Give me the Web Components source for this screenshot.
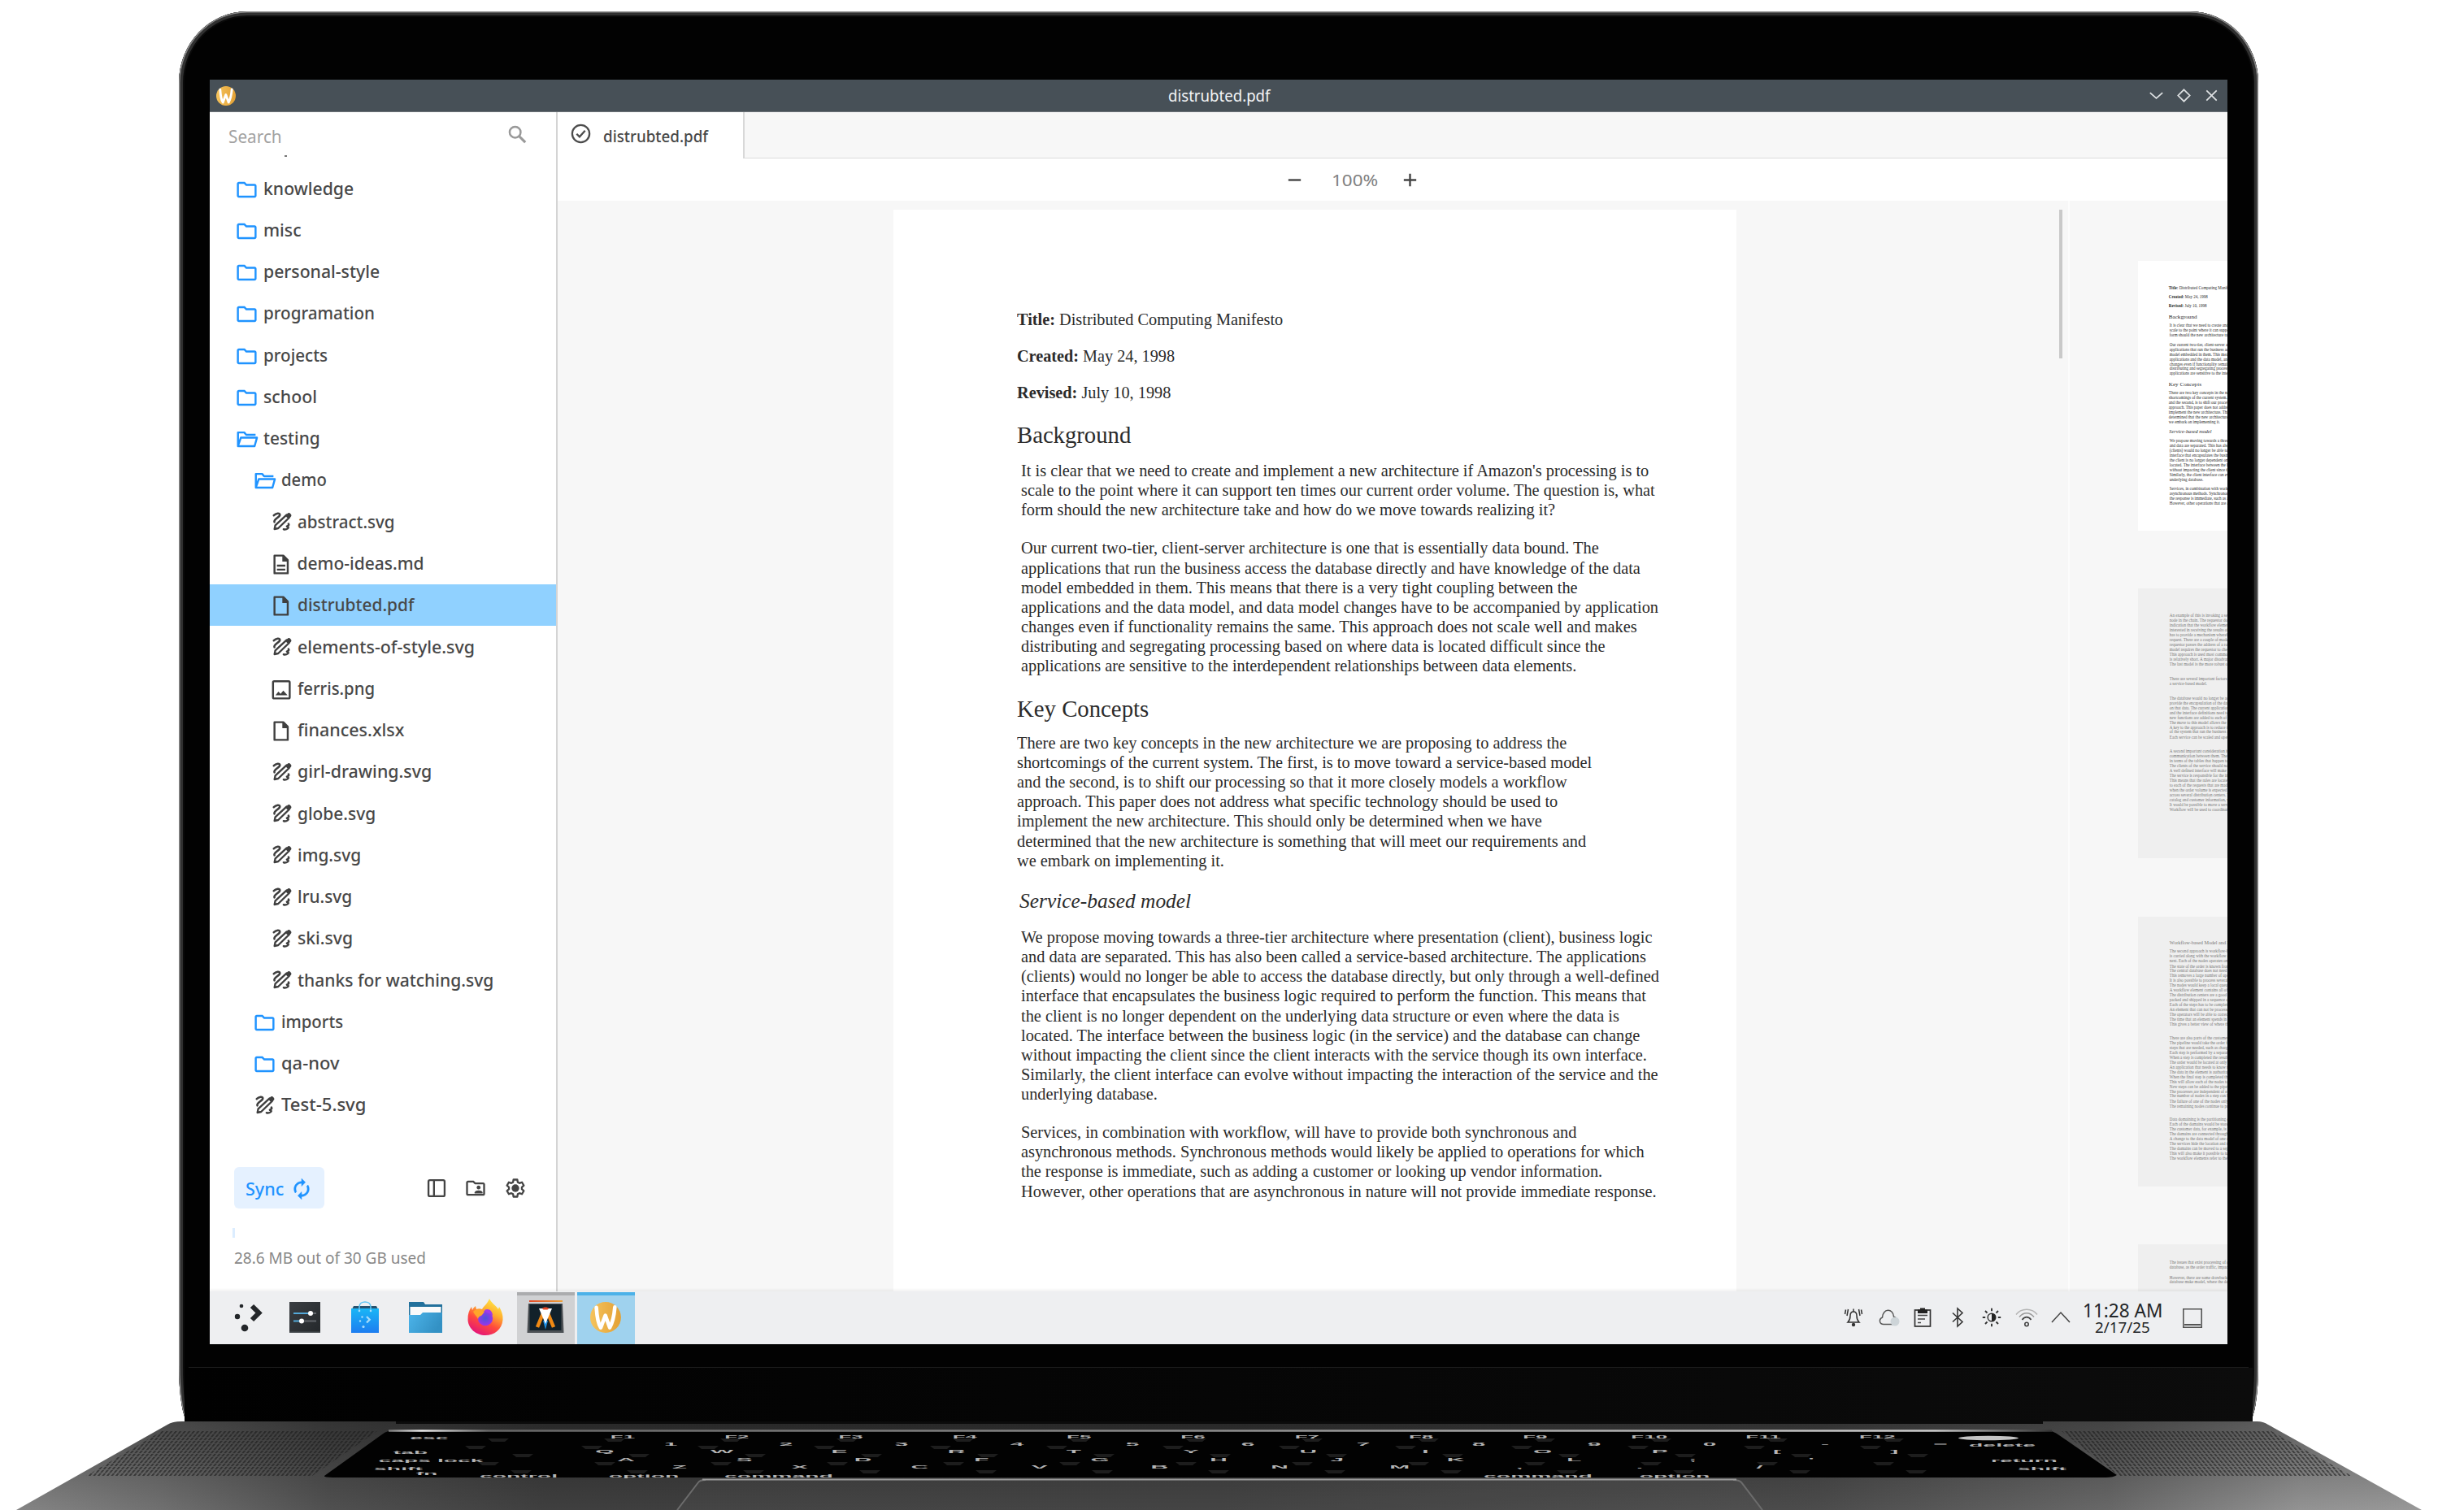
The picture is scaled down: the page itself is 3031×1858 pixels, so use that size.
<!DOCTYPE html>
<html lang="en">
<head>
<meta charset="utf-8">
<title>distrubted.pdf</title>
<style>
  body { margin: 0; background: #fff; width: 3031px; height: 1858px; overflow: hidden; font-family: "Noto Sans", "Open Sans", sans-serif; color: #484848; }
</style>
</head>
<body>
<laptop-mockup>
  <desktop-screen></desktop-screen>
</laptop-mockup>
<script>
const define = (name, html, after) => customElements.define(name, class extends HTMLElement {
  constructor() { super(); this.attachShadow({ mode: 'open' }); }
  connectedCallback() {
    if (this.ready) return;
    this.ready = true;
    this.shadowRoot.innerHTML = typeof html === 'function' ? html(this) : html;
    if (after) after(this);
  }
});

/* One line of text condensed or widened to the width in its "w" attribute. */
define('fit-text', el => `<style>
  :host{display:block;width:${el.getAttribute('w')}px;white-space:nowrap}
  span{display:inline-block;transform-origin:0 50%}
</style><span><slot></slot></span>`, el => {
  const s = el.shadowRoot.querySelector('span');
  const n = s.offsetWidth;
  if (n) s.style.transform = `scaleX(${el.getAttribute('w') / n})`;
});

const ICONS = {
  folder: '<path fill="#1f93ff" d="M20 6h-8l-2-2H4c-1.1 0-2 .9-2 2v12c0 1.100.9 2 2 2h16c1.100 0 2-.9 2-2V8c0-1.100-.9-2-2-2zm0 12H4V6h5.200l2 2H20v10z"/>',
  open: '<path fill="none" stroke="#1f93ff" stroke-width="2" stroke-linejoin="round" d="M21 7.400h-9.500l-2-2.300H3.100V19L6 10.400H22.400L20 19H3.400"/>',
  draw: '<g fill="none" stroke="#3f3f3f" stroke-linecap="round"><path stroke-width="2.400" d="M2.600 4.800C5 2.200 9.700 1.500 9.500 4.200 9.300 7 2 9 3.300 12.300"/><path stroke-width="2.200" stroke-linejoin="round" d="M17 4.200 4.300 16 3.400 20.300 7.600 19.400 20 7.400z"/><path stroke-width="5.400" d="M19.300 5.200 19.700 4.800"/><path stroke-width="2.400" d="M19.300 14.500c1 1.600-.6 1.800-1.800 2.700M13.800 20.500c1.800.5 4.500-.1 5.300-1.800"/></g>',
  doc: '<path fill="none" stroke="#3f3f3f" stroke-width="2" stroke-linejoin="round" d="M5.500 3h9L19 7.500V21H5.500z"/><path fill="#3f3f3f" d="M13.500 3v6H20z"/>',
  text: '<path fill="none" stroke="#3f3f3f" stroke-width="2" stroke-linejoin="round" d="M5.500 3h9L19 7.500V21H5.500zM8 13.300h8.500M8 17.300h8.500"/><path fill="#3f3f3f" d="M13.500 3v6H20z"/>',
  image: '<rect x="4" y="3.500" width="17" height="17.500" rx="1.200" fill="none" stroke="#3f3f3f" stroke-width="2"/><path fill="#3f3f3f" d="M6.500 17.800 9.500 14l2.200 2.300L14.500 13l4.300 4.800z"/>',
  search: '<circle cx="9.500" cy="9.500" r="6" fill="none" stroke="#999" stroke-width="2.200"/><path stroke="#999" stroke-width="2.800" d="M14 14l6.600 6.600"/>',
  check: '<g fill="none" stroke="#4c4c4c" stroke-width="2.200"><circle cx="12" cy="12" r="10.200"/><path d="M7 12.200l3.500 3.500L17 8.500"/></g>',
  sync: '<path fill="#1f93ff" stroke="#1f93ff" stroke-width=".4" d="M12 6v3l4-4-4-4v3c-4.420 0-8 3.580-8 8 0 1.570.46 3.030 1.240 4.260L6.700 14.800c-.45-.83-.7-1.790-.7-2.800 0-3.310 2.690-6 6-6zm6.760 1.740L17.300 9.200c.44.84.7 1.790.7 2.800 0 3.310-2.690 6-6 6v-3l-4 4 4 4v-3c4.420 0 8-3.580 8-8 0-1.570-.46-3.030-1.240-4.260z"/>',
  panel: '<g fill="none" stroke="#444" stroke-width="2"><rect x="3.500" y="3.500" width="17" height="17" rx="1.500"/><path d="M9.300 3.500v17"/></g>',
  shared: '<path fill="#444" d="M20 6h-8l-2-2H4c-1.100 0-2 .9-2 2v12c0 1.100.9 2 2 2h16c1.100 0 2-.9 2-2V8c0-1.100-.9-2-2-2zm0 12H4V6h5.200l2 2H20v10z"/><circle cx="15.200" cy="11.300" r="2" fill="#444"/><path fill="#444" d="M11 17.600v-1.100c0-1.400 2.800-2.100 4.200-2.100s4.200.7 4.200 2.100v1.100z"/>',
  gear: '<path fill="none" stroke="#444" stroke-width="2" stroke-linejoin="round" d="M10 3h4l.5 2.700 1.800 1 2.600-.9 2 3.400-2.100 1.800v2l2.100 1.800-2 3.400-2.600-.9-1.800 1L14 21h-4l-.5-2.700-1.800-1-2.600.9-2-3.400L5.200 13v-2L3.100 9.200l2-3.400 2.600.9 1.800-1z"/><circle cx="12" cy="12" r="4" fill="#444"/>',
  minus: '<path stroke="#444" stroke-width="2.500" d="M4 12h16"/>',
  plus: '<path stroke="#444" stroke-width="2.500" d="M4 12h16M12 4v16"/>',
  chevron: '<path fill="none" stroke="#dfe2e4" stroke-width="1.800" d="M4 8.500l8 7 8-7"/>',
  diamond: '<path fill="none" stroke="#dfe2e4" stroke-width="1.800" d="M12 4.500l7.500 7.500-7.500 7.500L4.500 12z"/>',
  close: '<path stroke="#dfe2e4" stroke-width="1.800" d="M5.500 5.500l13 13m0-13l-13 13"/>',
  wlogo: '<defs><linearGradient id="w" x1="0" x2="1"><stop offset="0" stop-color="#f5c35c"/><stop offset="1" stop-color="#e3a135"/></linearGradient></defs><circle cx="12" cy="12" r="12" fill="url(#w)"/><path fill="none" stroke="#fff" stroke-width="2.900" stroke-linecap="round" stroke-linejoin="round" d="M4.800 4.300C5.300 12 6.500 17.500 8.200 20L11.800 10.500 15.200 20C17.500 16 18.700 10 19.200 4"/>',
  bell: '<g fill="none" stroke="#333" stroke-width="1.500"><path d="M5 18h14c-2-2-3-4-3-8 0-3-1.500-5-4-5S8 7 8 10c0 4-1 6-3 8z"/><path d="M12 5V1.500M5.500 2 4 10M2.500 2.500 1.500 8M18.500 2 20 10M21.500 2.500l1 5.500"/></g><circle cx="12" cy="21" r="2.200" fill="#333"/>',
  cloud: '<path fill="none" stroke="#555" stroke-width="1.500" d="M6 20.500C1 20.500-.5 14.500 4.500 12 5 1 17.500 0 18.500 11c5.500 2 5 9.500 0 9.500z"/><circle cx="20" cy="17" r="5.500" fill="#cdd4d8"/>',
  clip: '<rect x="2.500" y="3" width="19" height="20" fill="none" stroke="#333" stroke-width="1.700"/><path fill="#222" d="M6 7V2.500h3V.5h6v2h3V7z"/><path stroke="#444" stroke-width="1.600" d="M6 9.500h12M6 14h9M6 18.500h4"/>',
  bt: '<path fill="none" stroke="#333" stroke-width="1.600" d="M6 6.500l12 11-6 5.500V1l6 5.500-12 11"/>',
  sun: '<circle cx="12" cy="12" r="4.800" fill="none" stroke="#333" stroke-width="1.500"/><path fill="#222" d="M12 7.200a4.800 4.800 0 0 1 0 9.600z"/><path stroke="#333" stroke-width="1.900" d="M12 .8v3.400M12 19.800v3.400M.8 12h3.400M19.800 12h3.400M4 4l2.500 2.500M17.500 17.500 20 20M4 20l2.500-2.500M17.500 6.500 20 4"/>',
  wifi: '<g fill="none"><path stroke="#b5b5b5" stroke-width="1.500" d="M-1 8.500c6-8.500 20-8.500 26 0"/><path stroke="#999" stroke-width="1.500" d="M3 11.500c5-6.500 13-6.500 18 0"/><path stroke="#444" stroke-width="1.700" d="M6.500 15c3-4.500 8-4.500 11 0"/><circle cx="12" cy="20.500" r="2.200" stroke="#444" stroke-width="1.600"/></g>',
  caret: '<path fill="none" stroke="#444" stroke-width="1.500" d="M1 18 12 6l11 12"/>',
  desk: '<path fill="none" stroke="#555" stroke-width="1.600" d="M.8.8h22.400v22.400H.8z"/><path stroke="#555" stroke-width="2" d="M2 20h20"/>'
};
define('ui-icon', el => {
  const s = el.getAttribute('size');
  return `<style>:host{display:block;flex:none;width:${s}px;height:${s}px}svg{display:block;overflow:visible}</style><svg width="${s}" height="${s}" viewBox="0 0 24 24" aria-hidden="true">${ICONS[el.getAttribute('name')]}</svg>`;
});

define('title-bar', `<style>
  :host{display:grid;grid-template-columns:1fr auto 1fr;align-items:center;height:40px;background:#475057;color:#f3f4f5;font-size:19.500px;border-bottom:1px solid #6c7378;box-sizing:border-box;padding:0 8px}
  .b{display:flex;justify-content:flex-end;gap:11px}
</style><ui-icon name="wlogo" size="24"></ui-icon><fit-text w="125">distrubted.pdf</fit-text>
<div class="b"><ui-icon name="chevron" size="23"></ui-icon><ui-icon name="diamond" size="23"></ui-icon><ui-icon name="close" size="23"></ui-icon></div>`);

/* File tree entries: label, depth, icon, label width. */
const TREE = [
  ['knowledge', 0, 'folder', 111], ['misc', 0, 'folder', 46.5], ['personal-style', 0, 'folder', 143.5], ['programation', 0, 'folder', 136.5],
  ['projects', 0, 'folder', 79.5], ['school', 0, 'folder', 66], ['testing', 0, 'open', 69.5], ['demo', 1, 'open', 56],
  ['abstract.svg', 2, 'draw', 119.5], ['demo-ideas.md', 2, 'text', 156], ['distrubted.pdf', 2, 'doc', 143], ['elements-of-style.svg', 2, 'draw', 218],
  ['ferris.png', 2, 'image', 95], ['finances.xlsx', 2, 'doc', 131], ['girl-drawing.svg', 2, 'draw', 165], ['globe.svg', 2, 'draw', 96.5],
  ['img.svg', 2, 'draw', 78.5], ['lru.svg', 2, 'draw', 67.5], ['ski.svg', 2, 'draw', 68.5], ['thanks for watching.svg', 2, 'draw', 241.5],
  ['imports', 1, 'folder', 76.5], ['qa-nov', 1, 'folder', 71], ['Test-5.svg', 1, 'draw', 104]
];

define('side-bar', `<style>
  :host{display:flex;flex-direction:column;width:428px;box-sizing:border-box;border-right:2px solid #d4d4d4;background:#fff}
  .search{display:flex;align-items:center;justify-content:space-between;height:53px;padding:4px 34px 0 22.500px;box-sizing:border-box;font-size:22px;line-height:28px;color:#a2a2a2}
  .search ui-icon{margin-top:-3px}
  .cut{height:15px;padding-left:92px}
  .cut i{display:block;width:3px;height:2px;background:#777}
  .row{display:flex;height:51.270px;align-items:center;box-sizing:border-box;font-size:21px;line-height:28px;font-weight:500}
  .row.sel{background:#90d1ff}
  .row span{display:block;flex:none}
  .row ui-icon{margin-top:3px}
  .row ui-icon[name=draw]{margin-top:1px}
  .tools{display:flex;align-items:center;margin-top:51px;padding:0 36px 0 29.500px;height:51px}
  .sync{display:flex;align-items:center;gap:8px;height:51px;width:111px;box-sizing:border-box;padding-left:14px;background:#e5f1ff;border-radius:6px;color:#1f93ff;font-size:22px;font-weight:500}
  .sync ui-icon{margin-top:2px}
  .sp{flex:1}
  .tools>ui-icon{margin-left:21.500px}
  .tools>.near{margin-left:19.500px}
  .bar{width:3px;height:12px;background:#dcedff;margin:24px 0 0 28px}
  .use{margin:10px 0 0 29.500px;font-size:20.500px;line-height:28px;color:#888}
</style>
<div class="search"><fit-text w="66">Search</fit-text><ui-icon name="search" size="27"></ui-icon></div>
<div class="cut"><i></i></div>
${TREE.map(([t, l, ic, w]) => {
  const f = ic === 'folder' || ic === 'open', left = f ? 30.5 + 22 * l : (l === 2 ? 75.5 : 55), tx = [65.5, 87.5, 107.5][l];
  return `<div class="row${t === 'distrubted.pdf' ? ' sel' : ''}"><span style="width:${left}px"></span><span style="width:${tx - left}px"><ui-icon name="${ic}" size="${f ? 29 : ic === 'draw' ? 26 : 29}" style="margin-left:${f || ic === 'draw' ? 0 : -2.5}px"></ui-icon></span><fit-text w="${w}">${t}</fit-text></div>`;
}).join('')}
<div class="tools"><div class="sync"><fit-text w="47">Sync</fit-text><ui-icon name="sync" size="28"></ui-icon></div><div class="sp"></div>
<ui-icon name="panel" size="28"></ui-icon><ui-icon class="near" name="shared" size="28"></ui-icon><ui-icon name="gear" size="28"></ui-icon></div>
<div class="bar"></div>
<div class="use"><fit-text w="236">28.6 MB out of 30 GB used</fit-text></div>`);

/* Blocks of a page: first baseline, left edge, font size, line pitch, css, lines as [text, width]. */
const PAGE1 = [
  [142, 152.5, 20.4, 24.2, '', [['<b>Title:</b> Distributed Computing Manifesto', 327.5]]],
  [187, 152.5, 20.4, 24.2, '', [['<b>Created:</b> May 24, 1998', 194.5]]],
  [232, 152.5, 20.4, 24.2, '', [['<b>Revised:</b> July 10, 1998', 189]]],
  [288, 152.5, 28.6, 30, '', [['Background', 140.5]]],
  [328, 157, 20.4, 24.3, '', [["It is clear that we need to create and implement a new architecture if Amazon's processing is to", 772], ['scale to the point where it can support ten times our current order volume. The question is, what', 780], ['form should the new architecture take and how do we move towards realizing it?', 657.5]]],
  [423.5, 157, 20.4, 24.18, '', [['Our current two-tier, client-server architecture is one that is essentially data bound. The', 710.5], ['applications that run the business access the database directly and have knowledge of the data', 761.5], ['model embedded in them. This means that there is a very tight coupling between the', 685], ['applications and the data model, and data model changes have to be accompanied by application', 783.5], ['changes even if functionality remains the same. This approach does not scale well and makes', 757.5], ['distributing and segregating processing based on where data is located difficult since the', 718.5], ['applications are sensitive to the interdependent relationships between data elements.', 683]]],
  [624.5, 152.5, 28.6, 30, '', [['Key Concepts', 162]]],
  [662.7, 152.5, 20.4, 24.23, '', [['There are two key concepts in the new architecture we are proposing to address the', 676], ['shortcomings of the current system. The first, is to move toward a service-based model', 707], ['and the second, is to shift our processing so that it more closely models a workflow', 677], ['approach. This paper does not address what specific technology should be used to', 665], ['implement the new architecture. This should only be determined when we have', 645.5], ['determined that the new architecture is something that will meet our requirements and', 700], ['we embark on implementing it.', 254.5]]],
  [860, 155, 24.6, 28, 'font-style:italic', [['Service-based model', 211]]],
  [902.2, 157, 20.4, 24.18, '', [['We propose moving towards a three-tier architecture where presentation (client), business logic', 776], ['and data are separated. This has also been called a service-based architecture. The applications', 769], ['(clients) would no longer be able to access the database directly, but only through a well-defined', 785], ['interface that encapsulates the business logic required to perform the function. This means that', 769], ['the client is no longer dependent on the underlying data structure or even where the data is', 735.5], ['located. The interface between the business logic (in the service) and the database can change', 761], ['without impacting the client since the client interacts with the service though its own interface.', 770], ['Similarly, the client interface can evolve without impacting the interaction of the service and the', 783.5], ['underlying database.', 168]]],
  [1142.3, 157, 20.4, 24.18, '', [['Services, in combination with workflow, will have to provide both synchronous and', 683], ['asynchronous methods. Synchronous methods would likely be applied to operations for which', 766.5], ['the response is immediate, such as adding a customer or looking up vendor information.', 715.5], ['However, other operations that are asynchronous in nature will not provide immediate response.', 781.5]]]
];
const L = (s) => s.split('|').map(t => [t, 0]);
const PAGE2 = [
  [142, 157, 20.4, 24.2, '', L('An example of this is invoking a service to pass a workflow element onto the next processing|node in the chain. The requestor does not expect the results back immediately, just an|indication that the workflow element was successfully queued. However, the requestor may be|interested in receiving the results of the request back eventually. To facilitate this, the service|has to provide a mechanism whereby the requestor can receive the results of an asynchronous|request. There are a couple of models for this, polling or callback. In the callback model the|requestor passes the address of a routine to invoke when the request completed. The polling|model requires the requestor to check on the status of the request from time to time.|This approach is used most commonly when the time between the request and a reply|is relatively short. A major disadvantage of the callback is that it may be inactive.|The last model is the more robust of them when the reply takes a long time.')],
  [456, 157, 20.4, 24.2, '', L('There are several important factors that need to be considered when thinking towards|a service-based model.')],
  [553, 157, 20.4, 24.2, '', L('The database would no longer be accessed directly by the applications, and the services|provide the encapsulation of the data and the business logic that is required to operate|on that data. The current applications would have to be modified to use the services|and the interface definitions need to be stable over time as the business evolves and|new functions are added to each of the services that own the data in the system.|The move to this model allows the services to change independently of the clients.|A key to the approach is to reduce the number of direct dependencies between the parts|of the system that run the business and the state that is kept in the central database.|Each service can be scaled and operated separately from the others in the architecture.')],
  [818, 157, 20.4, 24.2, '', L('A second important consideration is the granularity of the services and the cost of the|communication between them. The interfaces should be defined in business terms and not|in terms of the tables that happen to be used to hold the data in the database today.|The clients of the service should not be aware of how the data is stored or located.|A well defined interface will make it possible to extend the business logic over time.|The service is responsible for the integrity of the data and the rules that apply to it.|This means that the rules are located in one place and are applied in a uniform way|to each of the requests that are made by the applications. It is a very important property|when the order volume is expected to grow tenfold and the processing is segregated|across several distribution centers. The same principle would be applied to vendors,|catalog and customer information, where data is shared by a number of applications.|It would be possible to move a service to another host without any client changes.|Workflow will be used to coordinate the work among the services.')]
];
const PAGE3 = [
  [139, 157, 25, 28, '', L('Workflow-based Model and Data Domaining')],
  [180, 157, 20.4, 24.2, '', L('The second approach is workflow-based. The data that is required to process an order|is carried along with the workflow element as it moves from one processing node to the|next. Each of the nodes operates on the element and passes it on when it is completed.|The state of the order is known from the position of the element in the workflow chain.|The central database does not need to be updated every time that the state changes.|This removes a large number of updates and reduces the load on the shared database.|It is also possible to process several elements at the same time on different nodes.|The nodes would keep a local queue of the elements that are waiting to be processed.|A workflow element contains all of the information that is required by the next node.|The distribution centers are a good example of this model since each order is picked,|packed and shipped in a sequence of steps that follow one another in a known order.|Each of the steps has to be completed before the next one is allowed to begin.|An element that can not be processed is moved to a queue of exceptions for review.|The operators will be able to correct the element and return it to the workflow.|The time that an element spends in each of the nodes can be measured as well.|This gives a better view of where the processing is delayed in the system.')],
  [610, 157, 20.4, 24.2, '', L('There are also parts of the customer order process that can be performed in this way.|The pipeline would take the order from the customer and move it through each of the|steps that are needed, such as charging the customer and allocating the inventory.|Each step is performed by a separate process that subscribes to a queue of elements.|When a step is completed the result is placed on the queue of the following process.|The order would be located at only one node at any time during the whole process.|An application that needs to know the state of the order can ask a tracking service.|The data in the element is authoritative while it is moving through the workflow.|When the final step is completed the order will be archived in the central database.|This will allow each of the nodes to be scaled when the order volume is increased.|New steps can be added to the pipeline without impact on the steps that exist today.|The processes are independent of each other and can be released on their own.|The number of nodes in a step can be increased when the volume requires it.|The failure of one of the nodes only affects the elements that are located there.|The remaining nodes continue to process the work that is waiting in the queue.')],
  [1015, 157, 20.4, 24.2, '', L('Data domaining is the partitioning of the data by the business function that owns it.|Each of the domains would be stored separately from the others in the architecture.|The customer data, for example, is not required by the receiving of the inventory.|The domains are connected through the services that are defined on each of them.|A change to the data model of one domain does not impact the other domains.|The services hide the location and the structure of the data from their clients.|The domains can be moved to a separate database when the load increases.|This will also make it possible to tune each of the databases for its own use.|The workflow elements refer to the data in a domain by means of its key.')]
];
const PAGE4 = [
  [98, 157, 20.4, 24.2, '', L('The issues that exist processing of orders with a|database, as the order traffic, impacts all of the')],
  [172, 157, 20.4, 24.2, '', L('However, there are some drawbacks to this model|database make model, where the data is located')]
];
const PAGES = [PAGE1, PAGE2, PAGE3, PAGE4];

define('doc-page', el => {
  let y = 0;
  const html = PAGES[+el.getAttribute('n') - 1].map(([b, x, f, lh, css, lines]) => {
    const top = b - lh / 2 - 0.3375 * f, m = top - y;
    y = top + lh * lines.length;
    return `<div style="margin:${m}px 0 0 ${x}px;font-size:${f}px;line-height:${lh}px;${css}">${lines.map(([t, w]) => w ? `<fit-text w="${w}" style="height:${lh}px">${t}</fit-text>` : `<p>${t}</p>`).join('')}</div>`;
  }).join('');
  return `<style>:host{display:flow-root;flex:none;width:1037px;height:1342px;background:#fff;color:#2b2b2b;font-family:"Liberation Serif",serif}p{margin:0;white-space:nowrap}</style>${html}`;
});

define('page-thumb', el => `<style>
  :host{display:block;width:256px;height:332px;overflow:hidden;flex:none;background:#fff}
  doc-page{transform:scale(.2472);transform-origin:0 0}
  :host([dim]) doc-page{background:#efefef;color:#777}
  :host([dim]){background:#efefef}
</style><doc-page n="${el.getAttribute('n')}"></doc-page>`);

define('pdf-view', `<style>
  :host{display:flex;flex-direction:column;flex:1;min-width:0;background:#f7f7f7}
  .tabs{display:flex;height:57px;flex:none}
  .tab{display:flex;align-items:center;gap:15.500px;width:229.500px;box-sizing:border-box;padding:0 0 4px 15.500px;background:#fff;border-right:2px solid #d8d8d8;font-size:19.500px;font-weight:500}
  .tab fit-text{padding-top:5px}
  .rest{flex:1;border-bottom:1.500px solid #dcdcdc;box-sizing:border-box}
  .bar{display:flex;align-items:center;height:52px;flex:none;background:#fff;padding-left:895px;font-size:20.500px;color:#808080}
  .bar fit-text{margin:0 28px 0 33.500px}
  .body{display:flex;flex:1;min-height:0;overflow:hidden}
  .main{display:flex;width:1860px;box-sizing:border-box;padding:11px 0 0 412.500px;flex:none;border-right:2px solid #fcfcfc}
  .thumb{width:4px;height:183px;background:#c9c9c9;margin-left:397px}
  .side{display:flex;flex-direction:column;gap:71.500px;padding:73.500px 0 0 83.500px}
</style>
<div class="tabs"><div class="tab"><ui-icon name="check" size="25"></ui-icon><fit-text w="129">distrubted.pdf</fit-text></div><div class="rest"></div></div>
<div class="bar"><ui-icon name="minus" size="23"></ui-icon><fit-text w="57">100%</fit-text><ui-icon name="plus" size="23"></ui-icon></div>
<div class="body"><div class="main"><doc-page n="1"></doc-page><div class="thumb"></div></div>
<div class="side"><page-thumb n="1"></page-thumb><page-thumb n="2" dim></page-thumb><page-thumb n="3" dim></page-thumb><page-thumb n="4" dim></page-thumb></div></div>`);

const APPS = [
  ['', '<g fill="#232629" transform="translate(2)"><circle cx="16" cy="8" r="2.300"/><circle cx="11" cy="21" r="3.200"/><circle cx="20" cy="35" r="4.300"/></g><path fill="none" stroke="#232629" stroke-width="6" d="M31 8l8.500 8.500L31 25"/>'],
  ['', '<defs><linearGradient id="a" x2="1" y2="1"><stop stop-color="#3a3e42"/><stop offset="1" stop-color="#24282b"/></linearGradient></defs><path fill="url(#a)" d="M3 3h38v38H3z"/><path fill="#4b5055" d="M3 39.500h38V41H3z"/><path stroke="#54a9d8" stroke-width="2" d="M8 17h20M8 26.500h9"/><path stroke="#60656a" stroke-width="2" d="M30 17h6M18 26.500h18"/><circle cx="29" cy="17" r="3" fill="#fff"/><circle cx="18" cy="26.500" r="3" fill="#fff"/>'],
  ['', '<defs><linearGradient id="b" x2="0" y2="1"><stop stop-color="#19b6f6"/><stop offset="1" stop-color="#1d7df0"/></linearGradient></defs><path fill="#27526e" d="M8 8h28l2 4H6z"/><path fill="url(#b)" d="M5 11h34v30H5z"/><path fill="none" stroke="#60c4f2" stroke-width="1.600" d="M15 13V9c0-8 14-8 14 0v4"/><g fill="#a8dcfb"><circle cx="15" cy="14" r="1.300"/><circle cx="29" cy="14" r="1.300"/><circle cx="18.500" cy="21.500" r="1.200"/><circle cx="16" cy="26.500" r="1.200"/><circle cx="20" cy="33.500" r="1.600"/></g><path fill="none" stroke="#a8dcfb" stroke-width="2.300" d="M24 21l3.700 3.700L24 28.500"/>'],
  ['', '<defs><linearGradient id="c" x2="1" y2=".4"><stop stop-color="#4cb4ea"/><stop offset="1" stop-color="#3391c4"/></linearGradient></defs><path fill="#23719c" d="M2 3h18l2 3h21v15H2z"/><path fill="#fafafa" d="M3.500 9h38v12h-38z"/><path fill="url(#c)" d="M2 19h14l3-3h24v25H2z"/>'],
  ['', '<defs><linearGradient id="d" x1=".8" x2=".3" y2="1"><stop stop-color="#fff04a"/><stop offset=".35" stop-color="#ffb02e"/><stop offset=".65" stop-color="#ff4a3c"/><stop offset="1" stop-color="#e3127c"/></linearGradient><radialGradient id="e"><stop stop-color="#4a55d8"/><stop offset="1" stop-color="#9a35e8"/></radialGradient></defs><path fill="url(#d)" d="M27-1c2 5 9 9 11 13l1-3c3 5 5 10 4.500 16C42.500 37 33 44 22 44S1 36 .5 25C.3 18 2 13 5 9l1 4c1-2 2-3.500 4-5l1 4c2-1 5-1 7 0 2-4 6-6 9-13z"/><circle cx="22" cy="23" r="9.200" fill="url(#e)"/><path fill="#ffa52a" d="M7 15c4-4 9-3 14 0l-3 4c-2 2-4 1-5 5-1-3-4-5-6-9z"/><path fill="#a13be8" d="M21 13c5-3 10 1 10 7-4-5-8-2-10-7z"/>'],
  ['g', '<path fill="#4c5054" d="M1 5h42l1.500 36h-45z"/><path fill="#12212a" d="M2.500 6h39v32h-39z"/><defs><linearGradient id="f"><stop stop-color="#e14a28"/><stop offset="1" stop-color="#eda33b"/></linearGradient></defs><path fill="url(#f)" d="M2 1h41v2H2z"/><path stroke="#f08a14" stroke-width="4.500" d="M19 17l-7 17M25 17l7 17"/><path fill="#1d8ee0" d="M19 26h6l-3 11z"/><path fill="#fff" d="M14 11h16l-8 19z"/><path fill="#e64a28" d="M18 11c1-2 7-2 8 0l-1.500 1.500h-5z"/>'],
  ['b', '<g transform="translate(3 3) scale(1.580)">' + ICONS.wlogo + '</g>']
];
define('task-bar', `<style>
  :host{display:flex;align-items:center;height:65px;flex:none;background:#eeeff1;box-sizing:border-box;padding:0 31px 0 7.500px;color:#232629;box-shadow:0 -2px 3px rgba(0,0,0,.06);position:relative}
  .apps{display:flex;gap:3px;height:64px;align-self:flex-end}
  .app{width:71px;box-sizing:border-box;display:flex;justify-content:center;padding-top:8.500px}
  .app svg{display:block;overflow:visible}
  .g{background:#d0d1d3;border-top:4px solid #abacae;padding-top:4.500px}
  .b{background:#9fd2ee;border-top:4px solid #4bb1e8;padding-top:4.500px}
  .sp{flex:1}
  .tray{display:flex;gap:18.500px;margin-right:15px;margin-top:-1px}
  .clock{display:flex;flex-direction:column;align-items:center;margin-right:25px;margin-top:-1px}
  .t{font-size:23px;line-height:22px}.d{font-size:18.500px;line-height:19px}
</style>
<div class="apps">${APPS.map(([c, s]) => `<div class="app ${c}"><svg width="44" height="44" viewBox="0 0 44 44" aria-hidden="true">${s}</svg></div>`).join('')}</div>
<div class="sp"></div>
<div class="tray">${['bell', 'cloud', 'clip', 'bt', 'sun', 'wifi', 'caret'].map(n => `<ui-icon name="${n}" size="24"></ui-icon>`).join('')}</div>
<div class="clock"><fit-text class="t" w="98">11:28 AM</fit-text><fit-text class="d" w="68">2/17/25</fit-text></div>
<ui-icon name="desk" size="24"></ui-icon>`);

define('desktop-screen', `<style>
  :host{display:flex;flex-direction:column;height:1556px;overflow:hidden;background:#f7f7f7}
  .work{display:flex;flex:1;min-height:0}
</style><title-bar></title-bar><div class="work"><side-bar></side-bar><pdf-view></pdf-view></div><task-bar></task-bar>`);

/* Keyboard legends, foreshortened: [text, x, y, size, horizontal stretch]. */
const KEYS = [];
const row = (s, x, y, p) => [...s].forEach((c, i) => KEYS.push([c, x + i * p, y, 26, 1.15]));
row('1234567890-=', 825, 29.5, 142);
row('QWERTYUIOP[]', 744, 39, 144.2);
row("ASDFGHJKL;'", 770, 49, 145.8);
row('ZXCVBNM,./', 836, 58, 147.6);
[['esc', 528, 21.5], ['tab', 505, 40], ['caps lock', 530, 49.500], ['shift', 490, 59.500], ['fn', 525, 65.500], ['control', 638, 69], ['option', 792, 69], ['command', 958, 69], ['command', 1892, 69], ['option', 2060, 69], ['delete', 2463, 31], ['return', 2490, 50], ['shift', 2512, 60]].forEach(([t, x, y]) => KEYS.push([t, x, y, 21, 1.35]));
const FN = Array.from({ length: 12 }, (_, i) => [766 + i * 140.3, 15.5]);

define('laptop-base', `<style>:host{display:block;height:109px}svg{display:block}</style>
<svg width="3031" height="109" viewBox="0 0 3031 109" aria-hidden="true">
<defs>
<linearGradient id="m"><stop stop-color="#858585"/><stop offset=".06" stop-color="#707070"/><stop offset=".13" stop-color="#505050"/><stop offset=".22" stop-color="#3f3f3f"/><stop offset=".5" stop-color="#3e3e3e"/><stop offset=".75" stop-color="#4c4c4c"/><stop offset=".87" stop-color="#686868"/><stop offset=".95" stop-color="#939393"/><stop offset="1" stop-color="#989898"/></linearGradient>
<linearGradient id="v" x2="0" y2="1"><stop stop-color="#000" stop-opacity=".35"/><stop offset="1" stop-color="#000" stop-opacity="0"/></linearGradient>
<linearGradient id="h"><stop stop-color="#777"/><stop offset=".02" stop-color="#eee"/><stop offset=".06" stop-color="#666"/><stop offset=".5" stop-color="#8c8c8c"/><stop offset=".93" stop-color="#ccc"/><stop offset="1" stop-color="#333"/></linearGradient>
<pattern id="p" width="5.500" height="4" patternUnits="userSpaceOnUse" patternTransform="skewX(-40)"><rect width="2.600" height="3.300" fill="#1a1a1a" fill-opacity=".6"/></pattern>
<pattern id="q" width="5.500" height="4" patternUnits="userSpaceOnUse" patternTransform="skewX(40)"><rect width="2.600" height="3.300" fill="#1a1a1a" fill-opacity=".6"/></pattern>
</defs>
<path fill="#0b0b0b" d="M228 0H2774V6H228z"/>
<path fill="url(#m)" d="M20 109 206 4Q212 0 224 0H487V3H2513V0H2776Q2784 0 2790 4L2979 109z"/>
<path fill="url(#v)" d="M20 109 206 4Q212 0 224 0H487V3H2513V0H2776Q2784 0 2790 4L2979 109z"/>
<path fill="url(#p)" d="M199 12H464L384 67H106z"/>
<path fill="url(#q)" d="M2536 12H2794L2893 67H2606z"/>
<path fill="#020202" d="M470 16Q476 11 486 11H2514Q2526 11 2533 17L2604 66Q2600 69 2590 69H410Q398 69 399 67z"/>
<path fill="none" stroke="url(#h)" stroke-width="2.500" d="M478 11.500 2524 11.600"/>
${[24, 33, 43, 53, 63].map((y, r) => Array.from({ length: 13 }, (_, i) => `<path fill="#1d1d1d" d="M${600 + i * 143 - [0, 28, -30, 12, -28][r]} ${y - 3}h26l-5 4h-16z"/>`).join('')).join('')}
<ellipse cx="2446" cy="20.500" rx="37" ry="2.800" fill="#c4c4c4"/>
<g fill="#b4b4b4" font-family="Liberation Sans, sans-serif" font-weight="bold" text-anchor="middle">
${KEYS.map(([t, x, y, s, k]) => `<text font-size="${s}" transform="translate(${x} ${y}) scale(${k} .22)">${t}</text>`).join('')}
${FN.map(([x, y], i) => `<text font-size="20" transform="translate(${x} ${y + 5}) scale(1.300 .3)">F${i + 1}</text>`).join('')}
</g>
<path fill="#fff" fill-opacity=".03" d="M866 72H2134Q2142 72 2145 76L2168 109H832L858 76Q860 72 866 72z"/>
<path fill="none" stroke="#6c6c6c" stroke-width="2" d="M833 109 859 75Q861 72 868 72"/>
<path fill="none" stroke="#6c6c6c" stroke-width="2" d="M2168 109 2142 75Q2139 72 2132 72"/>
<path stroke="#9a9a9a" stroke-width="2" d="M864 71.500H2136"/>
</svg>`);

define('laptop-mockup', `<style>
  :host{display:flex;flex-direction:column;width:3031px;height:1858px;padding-top:14px;box-sizing:border-box}
  .lid{display:flex;flex-direction:column;margin-left:220px;width:2558px;height:1735px;box-sizing:border-box;padding:84px 38px 0 38px;background:#020202;
    border-radius:84px 84px 12px 12px/88px 88px 70px 70px;
    box-shadow:inset 0 0 0 1.500px #8a8a8a,inset 0 0 0 5px #303030,inset 0 0 0 7px #0a0a0a}
  .lip{height:1px;background:#1d1d1d;margin:28px -26px 0}
  .chin{flex:1;margin:0 -31px;background:linear-gradient(90deg,#010101,#060606 50%,#0c0c0c)}
  ::slotted(*){flex:none}
</style><div class="lid"><slot></slot><div class="lip"></div><div class="chin"></div></div><laptop-base></laptop-base>`);
</script>
</body>
</html>
